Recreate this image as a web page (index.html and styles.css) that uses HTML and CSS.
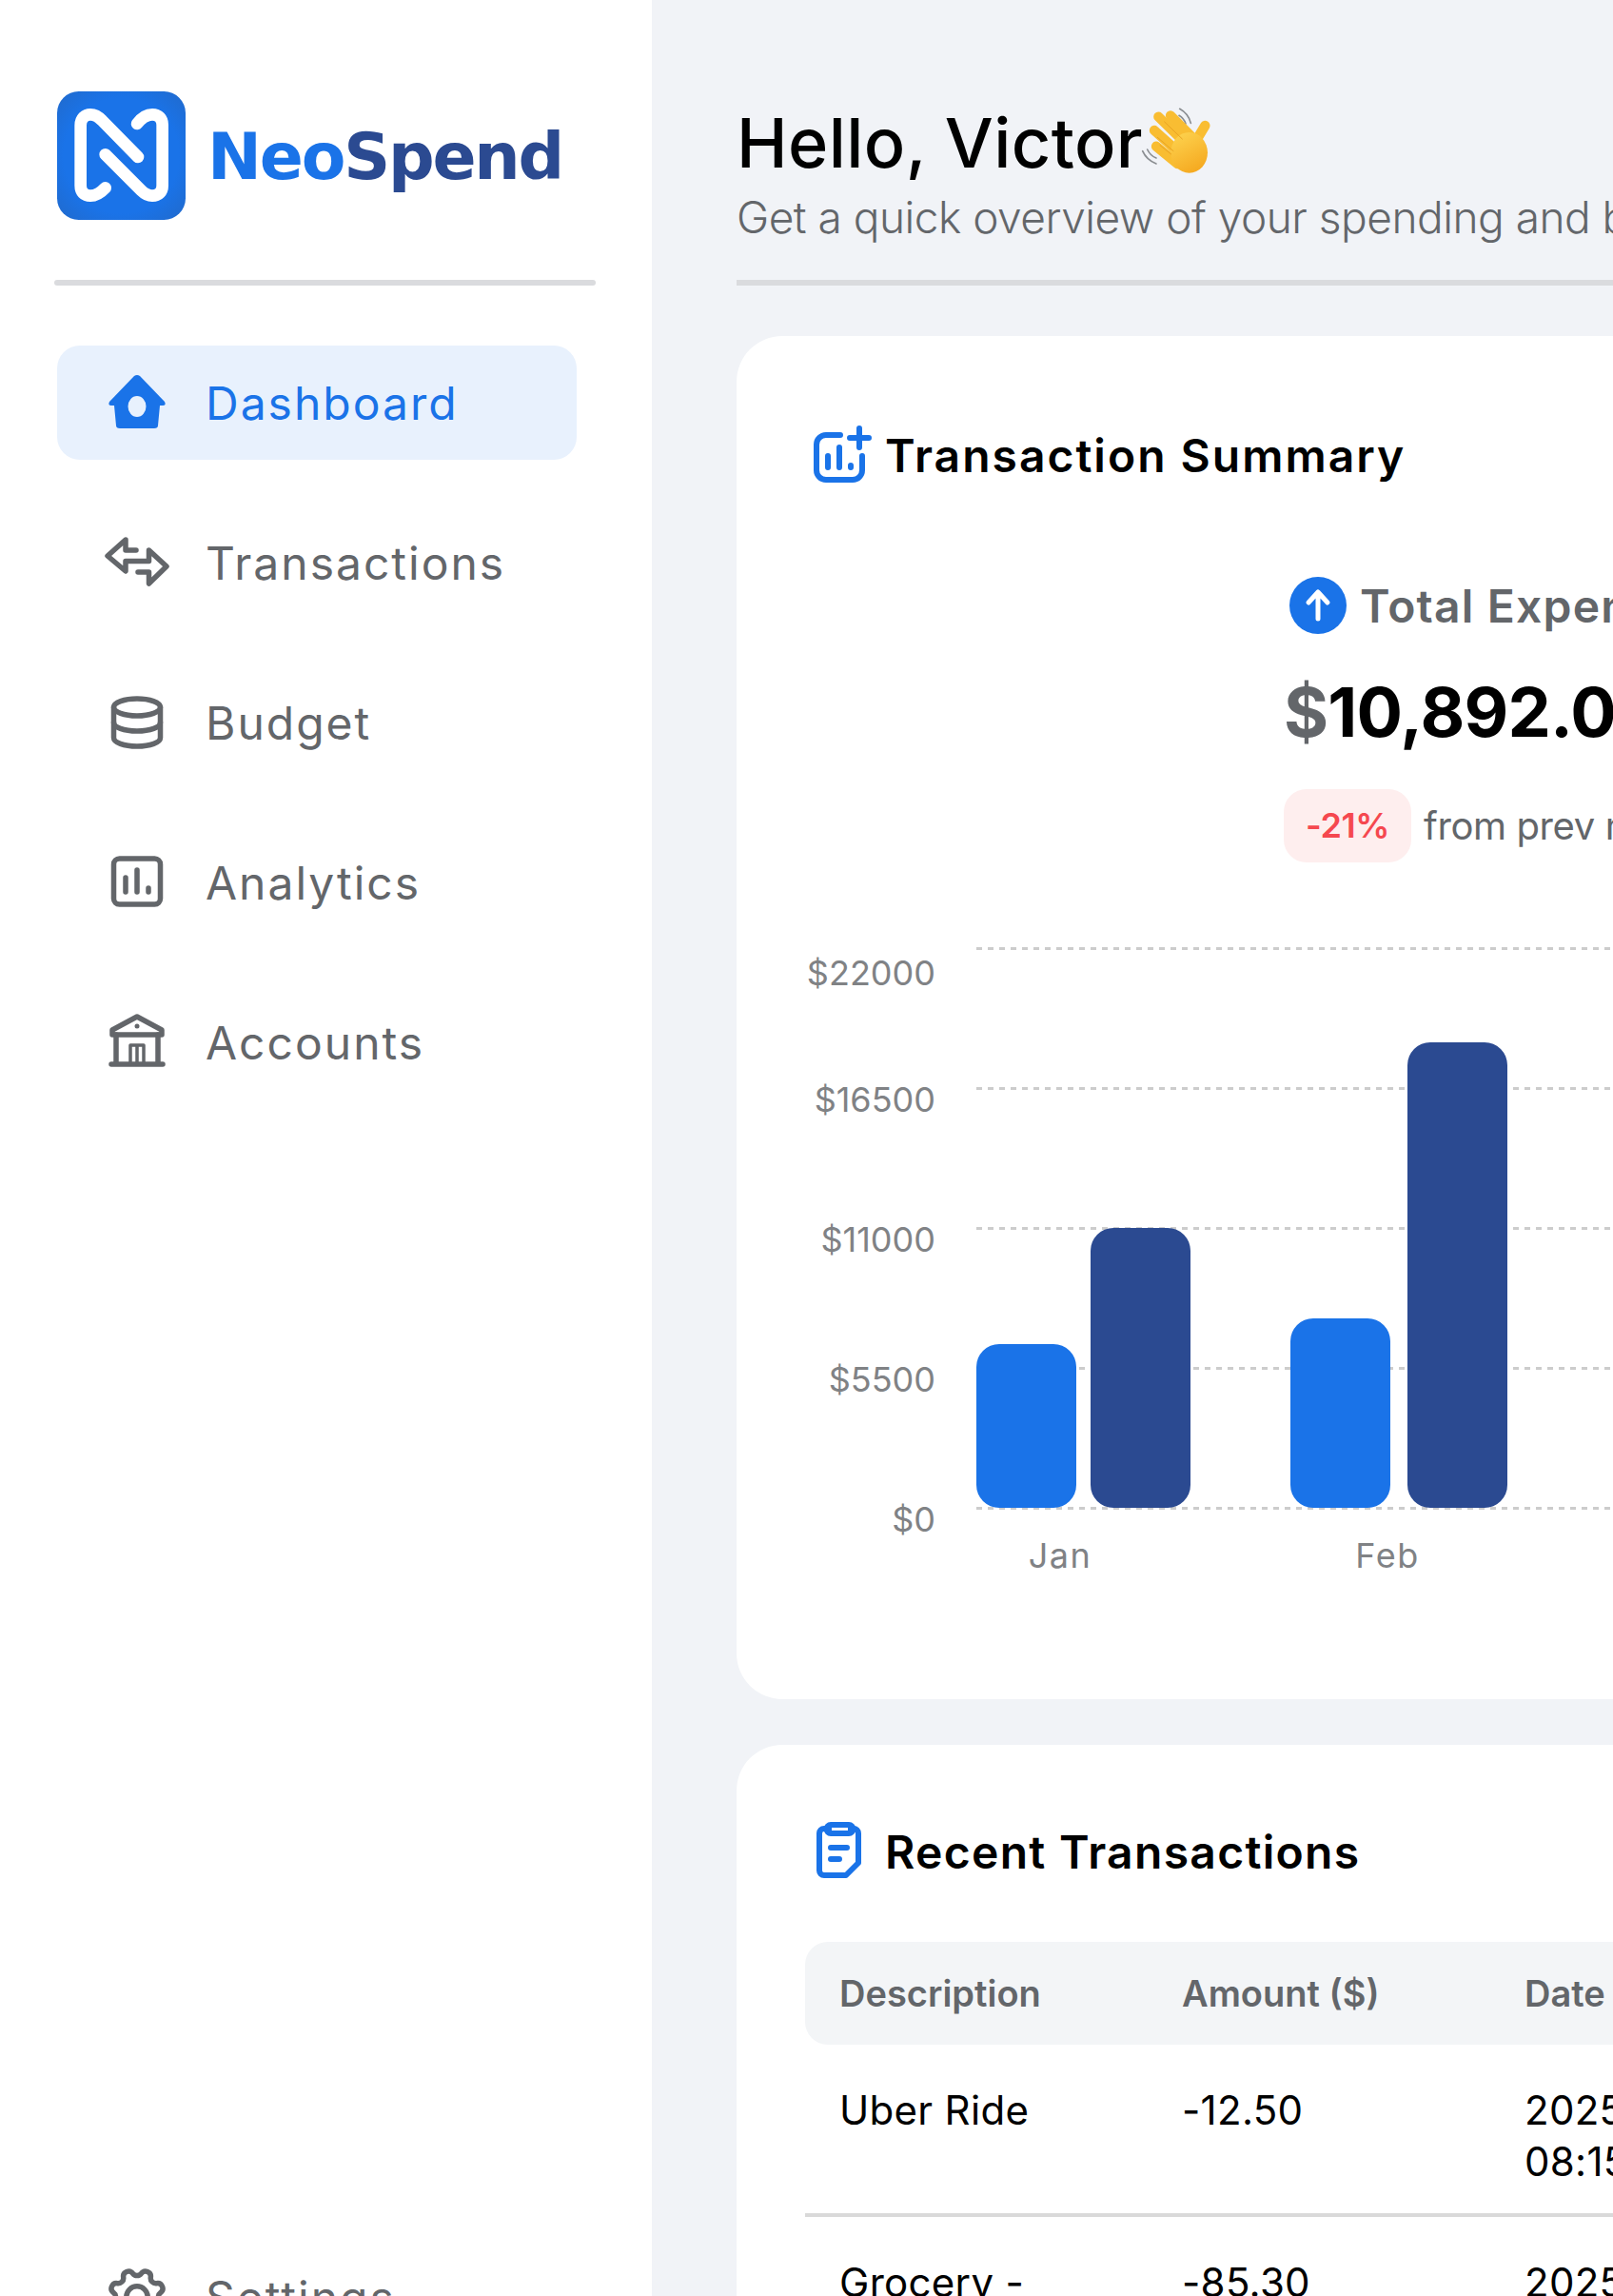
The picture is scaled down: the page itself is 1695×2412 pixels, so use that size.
FILE: index.html
```html
<!DOCTYPE html>
<html lang="en">

<head>
    <meta charset="UTF-8">
    <meta name="viewport" content="width=device-width, initial-scale=1.0">
    <title>NeoSpend</title>
    <link rel="stylesheet" href="styles.css">
</head>

<body>
    <div class="app">
        <aside class="sidebar">
            <div class="brand">
                <svg class="brand-mark" viewBox="30 33 405 405">
                    <defs>
                        <radialGradient id="markFill" r="0.75">
                            <stop offset="0.6" stop-color="#1a73e8" />
                            <stop offset="1" stop-color="#2268c6" />
                        </radialGradient>
                    </defs>
                    <rect x="30" y="33" width="405" height="405" rx="68" fill="url(#markFill)" />
                    <path d="M182 337C165 355 150 362 135 362C115 362 104 350 104 330V140C104 118 118 106 135 106C150 106 160 112 172 125L285 240" />
                    <path d="M182 232L295 345C307 357 318 362 330 362C350 362 362 350 362 330V138C362 118 350 106 330 106C312 106 295 118 282 135" />
                </svg>
                <span class="brand-name"><span class="brand-neo">Neo</span>Spend</span>
            </div>
            <div class="rule rule-side"></div>
            <nav class="nav">
                <a class="nav-item active" href="#">
                    <svg class="nav-icon" viewBox="0 0 60 60">
                        <path class="solid" fill-rule="evenodd" d="M27 2Q30 0 33 2L59 29Q61 33 57 33H54L52 54Q52 57 48 57H12Q8 57 8 54L6 33H3Q-1 33 1 29ZM30 23A9.5 11 0 1 0 30 45A9.5 11 0 1 0 30 23Z" />
                    </svg>
                    Dashboard
                </a>
                <a class="nav-item" href="#">
                    <svg class="nav-icon" viewBox="0 0 60 60">
                        <path d="M29 17H18V6L-1 23L18 39V28.5H42.5V17L61 34L42.5 52V40H31" />
                    </svg>
                    Transactions
                </a>
                <a class="nav-item" href="#">
                    <svg class="nav-icon" viewBox="0 0 60 60">
                        <ellipse cx="30" cy="14" rx="24.5" ry="9" />
                        <path d="M5.5 14V46C5.5 51 16 55 30 55S54.5 51 54.5 46V14" />
                        <path d="M5.5 30C5.5 35 16 39 30 39S54.5 35 54.5 30" />
                    </svg>
                    Budget
                </a>
                <a class="nav-item" href="#">
                    <svg class="nav-icon" viewBox="0 0 60 60">
                        <rect x="5.5" y="5" width="49" height="48" rx="6" />
                        <path d="M18 25V40M30 17V40M42 36V40" />
                    </svg>
                    Analytics
                </a>
                <a class="nav-item" href="#">
                    <svg class="nav-icon" viewBox="0 0 60 60">
                        <path d="M30 3L56 17V22H4V17Z" />
                        <path d="M8 22V53M52 22V53M3 53H57" />
                        <path class="bank-columns" d="M23 33H37M23 33V53M30 33V53M37 33V53" />
                        <circle class="solid" cx="30" cy="13" r="2.5" />
                    </svg>
                    Accounts
                </a>
                <a class="nav-item nav-bottom" href="#">
                    <svg class="nav-icon" viewBox="2.6 2.6 18.8 18.8">
                        <g transform="rotate(22.5 12 12)">
                            <path class="gear" d="M10.325 4.317c.426 -1.756 2.924 -1.756 3.35 0a1.724 1.724 0 0 0 2.573 1.066c1.543 -.94 3.31 .826 2.37 2.37a1.724 1.724 0 0 0 1.065 2.572c1.756 .426 1.756 2.924 0 3.35a1.724 1.724 0 0 0 -1.066 2.573c.94 1.543 -.826 3.31 -2.37 2.37a1.724 1.724 0 0 0 -2.572 1.065c-.426 1.756 -2.924 1.756 -3.35 0a1.724 1.724 0 0 0 -2.573 -1.066c-1.543 .94 -3.31 -.826 -2.37 -2.37a1.724 1.724 0 0 0 -1.065 -2.572c-1.756 -.426 -1.756 -2.924 0 -3.35a1.724 1.724 0 0 0 1.066 -2.573c-.94 -1.543 .826 -3.31 2.37 -2.37c1 .608 2.296 .07 2.572 -1.065z" />
                        </g>
                        <circle class="gear" cx="12" cy="12" r="3.5" />
                    </svg>
                    Settings
                </a>
            </nav>
        </aside>

        <main class="main">
            <div class="hello">
                <h1>Hello, Victor</h1>
                <svg class="wave" viewBox="0 0 300 270">
                    <defs>
                        <linearGradient id="waveFill" x1="0.2" y1="0" x2="0.7" y2="1">
                            <stop offset="0" stop-color="#fdd24e" />
                            <stop offset="1" stop-color="#f5a81f" />
                        </linearGradient>
                    </defs>
                    <g class="wave-lines">
                        <path d="M152 37C170 47 182 62 187 82" />
                        <path d="M150 58C160 64 167 72 171 84" />
                        <path d="M35 170C43 188 57 202 78 210" />
                        <path d="M50 165C56 178 65 187 78 192" />
                    </g>
                    <g class="fingers">
                        <path d="M85 62L170 145" />
                        <path d="M123 58L195 130" />
                        <path d="M72 105L150 175" />
                        <path d="M78 155L145 210" />
                        <path d="M232 90L205 135" />
                    </g>
                    <ellipse cx="182" cy="175" rx="58" ry="64" fill="url(#waveFill)" />
                    <g class="finger-gaps">
                        <path d="M104 78L160 132" />
                        <path d="M82 127L132 170" />
                        <path d="M90 152L125 180" />
                    </g>
                </svg>
            </div>
            <p class="subtitle">Get a quick overview of your spending and budget status this month.</p>
            <div class="rule rule-main"></div>

            <section class="card card-summary">
                <div class="card-title">
                    <svg class="title-icon" viewBox="0 0 72 72">
                        <path d="M60 37V52A10 10 0 0 1 50 62H22A10 10 0 0 1 12 52V25A10 10 0 0 1 22 15H37" />
                        <path d="M57 8V28M47 18H67" />
                        <path d="M24 37V49M36 28V49M48 47V49" />
                    </svg>
                    <h2>Transaction Summary</h2>
                </div>

                <div class="stat">
                    <div class="stat-label">
                        <svg class="stat-icon" viewBox="0 0 60 60">
                            <circle cx="30" cy="30" r="30" />
                            <path d="M30 44V17M20 27L30 16L40 27" />
                        </svg>
                        Total Expenses
                    </div>
                    <div class="stat-value"><span class="dollar">$</span>10,892.00</div>
                    <div class="stat-change">
                        <span class="badge">-21%</span>
                        from prev month
                    </div>
                </div>

                <div class="chart">
                    <div class="y-axis">
                        <span>$22000</span>
                        <span>$16500</span>
                        <span>$11000</span>
                        <span>$5500</span>
                        <span>$0</span>
                    </div>
                    <div class="plot-col">
                        <div class="plot">
                            <div class="grid-lines">
                                <i></i><i></i><i></i><i></i><i></i>
                            </div>
                            <div class="bars">
                                <div class="bar-group">
                                    <div class="bar bar-in" style="height:172px"></div>
                                    <div class="bar bar-out" style="height:294px"></div>
                                </div>
                                <div class="bar-group">
                                    <div class="bar bar-in" style="height:199px"></div>
                                    <div class="bar bar-out" style="height:489px"></div>
                                </div>
                            </div>
                        </div>
                        <div class="x-axis">
                            <span>Jan</span>
                            <span>Feb</span>
                        </div>
                    </div>
                </div>
            </section>

            <section class="card card-recent">
                <div class="card-title">
                    <svg class="title-icon" viewBox="0 0 72 72">
                        <path d="M21 12H20A5 5 0 0 0 15 17V56A5 5 0 0 0 20 61H43L56 48V17A5 5 0 0 0 51 12H50" />
                        <path class="clip" d="M27 5H46A7 7 0 0 1 46 20H27A7 7 0 0 1 27 5ZM28 11V14H45V11Z" />
                        <path d="M27 32H44M27 44H36" />
                    </svg>
                    <h2>Recent Transactions</h2>
                </div>

                <table class="tx-table">
                    <thead>
                        <tr>
                            <th>Description</th>
                            <th>Amount ($)</th>
                            <th>Date</th>
                        </tr>
                    </thead>
                    <tbody>
                        <tr>
                            <td>Uber Ride</td>
                            <td>-12.50</td>
                            <td>2025-05-01<br>08:15 AM</td>
                        </tr>
                        <tr>
                            <td>Grocery - Walmart</td>
                            <td>-85.30</td>
                            <td>2025-05-01<br>10:40 AM</td>
                        </tr>
                    </tbody>
                </table>
            </section>
        </main>
    </div>
</body>

</html>
```
FILE: styles.css
```css
* {
    box-sizing: border-box;
}

html,
body {
    margin: 0;
    height: 2412px;
    overflow: hidden;
}

body {
    font-family: Inter, "Noto Sans", sans-serif;
    background-color: #f1f3f7;
    color: #000;
}

.app {
    display: flex;
    width: 2400px;
}

/* sidebar */
.sidebar {
    flex: none;
    width: 685px;
    height: 2520px;
    padding: 96px 0 0 60px;
    background-color: #fff;
    display: flex;
    flex-direction: column;
}

.brand {
    display: flex;
    align-items: center;
    gap: 23px;
    height: 135px;
}

.brand-mark {
    width: 135px;
    height: 135px;
    flex: none;
}

.brand-mark path {
    fill: none;
    stroke: #fff;
    stroke-width: 38;
    stroke-linecap: round;
    stroke-linejoin: round;
}

.brand-name {
    margin-top: 2px;
    font-family: "DejaVu Sans", sans-serif;
    font-size: 68px;
    font-weight: 700;
    letter-spacing: -2.2px;
    color: #2b4a91;
}

.brand-neo {
    color: #1a73e8;
}

.rule {
    height: 6px;
    background-color: #dadbde;
}

.rule-side {
    width: 569px;
    margin: 63px 0 63px -3px;
    border-radius: 3px;
}

.nav {
    flex: 1;
    display: flex;
    flex-direction: column;
    gap: 48px;
}

.nav-item {
    display: flex;
    align-items: center;
    gap: 42px;
    flex: none;
    width: 546px;
    height: 120px;
    padding-left: 54px;
    border-radius: 24px;
    font-size: 48px;
    letter-spacing: 2px;
    color: #63666a;
    text-decoration: none;
}

.nav-item.active {
    background-color: #e8f1fd;
    color: #1a73e8;
}

.nav-bottom {
    margin-top: auto;
    margin-bottom: 47px;
}

.nav-icon {
    flex: none;
    width: 60px;
    height: 60px;
    overflow: visible;
    fill: none;
    stroke: currentColor;
    stroke-width: 5.5;
    stroke-linecap: round;
    stroke-linejoin: round;
}

.nav-icon .solid {
    fill: currentColor;
    stroke: none;
}

.nav-icon .bank-columns {
    stroke-width: 3.5;
}

.nav-icon .gear {
    stroke-width: 1.72;
}

/* main column */
.main {
    flex: none;
    width: 1500px;
    padding: 102px 0 0 89px;
}

.hello {
    display: flex;
    align-items: center;
    height: 96px;
}

h1 {
    margin: 0;
    font-size: 72px;
    font-weight: 500;
    line-height: 96px;
    letter-spacing: 0.4px;
}

.wave {
    flex: none;
    width: 100px;
    height: 90px;
    margin: 0 0 6px -12px;
}

.wave-lines path {
    fill: none;
    stroke: #8a8d91;
    stroke-width: 5;
    stroke-linecap: round;
}

.fingers path {
    fill: none;
    stroke: #f9bd32;
    stroke-width: 31;
    stroke-linecap: round;
}

.finger-gaps path {
    fill: none;
    stroke: #e8a323;
    stroke-width: 3;
    stroke-linecap: round;
}

.subtitle {
    margin: 0;
    font-size: 46px;
    line-height: 60px;
    font-weight: 300;
    letter-spacing: -0.5px;
    color: #63666a;
    white-space: nowrap;
}

.rule-main {
    margin: 36px 0 53px;
}

.card {
    background-color: #fff;
    border-radius: 48px;
    padding-left: 72px;
}

.card-summary {
    height: 1432px;
    padding-top: 90px;
}

.card-recent {
    margin-top: 48px;
    height: 800px;
    padding-top: 77px;
}

.card-title {
    display: flex;
    align-items: center;
    gap: 12px;
    height: 70px;
}

.title-icon {
    flex: none;
    width: 72px;
    height: 72px;
    fill: none;
    stroke: #1a73e8;
    stroke-width: 6;
    stroke-linecap: round;
    stroke-linejoin: round;
}

.title-icon .clip {
    fill: #1a73e8;
    fill-rule: evenodd;
    stroke: none;
}

h2 {
    margin: 0;
    font-size: 48px;
    font-weight: 600;
    letter-spacing: 2px;
}

.card-recent h2 {
    letter-spacing: 1.3px;
}

/* total expenses */
.stat {
    margin: 93px 0 0 503px;
}

.stat-label {
    display: flex;
    align-items: center;
    gap: 14px;
    height: 60px;
    padding-left: 6px;
    font-size: 48px;
    font-weight: 600;
    letter-spacing: 1.2px;
    color: #63666a;
    white-space: nowrap;
}

.stat-icon {
    flex: none;
    width: 60px;
    height: 60px;
}

.stat-icon circle {
    fill: #1a73e8;
}

.stat-icon path {
    fill: none;
    stroke: #fff;
    stroke-width: 5;
    stroke-linecap: round;
    stroke-linejoin: round;
}

.stat-value {
    margin-top: 32px;
    font-size: 72px;
    font-weight: 700;
    line-height: 100px;
    letter-spacing: -0.8px;
    white-space: nowrap;
}

.dollar {
    color: #63666a;
}

.stat-change {
    display: flex;
    align-items: center;
    gap: 13px;
    margin-top: 31px;
    font-size: 40px;
    letter-spacing: -0.4px;
    color: #63666a;
    white-space: nowrap;
}

.badge {
    display: block;
    width: 134px;
    height: 77px;
    border-radius: 24px;
    background-color: #feeeee;
    color: #f5484f;
    font-size: 36px;
    font-weight: 600;
    line-height: 77px;
    text-align: center;
}

/* chart */
.chart {
    display: flex;
    gap: 43px;
    margin-top: 89px;
    font-size: 36px;
    color: #808285;
}

.y-axis {
    flex: none;
    width: 137px;
    padding-top: 5px;
    display: flex;
    flex-direction: column;
    gap: 103px;
    align-items: flex-end;
}

.y-axis span {
    line-height: 44px;
}

.y-axis span:first-child {
    margin-bottom: -14px;
}

.plot-col {
    flex: 1;
}

.plot {
    position: relative;
    height: 591px;
}

.grid-lines {
    position: absolute;
    inset: 0;
    display: flex;
    flex-direction: column;
    justify-content: space-between;
}

.grid-lines i {
    display: block;
    height: 3px;
    background-image: repeating-linear-gradient(to right, #ccc 0 6px, transparent 6px 12px);
}

.bars {
    position: relative;
    display: flex;
    align-items: flex-end;
    gap: 105px;
    height: 589px;
}

.bar-group {
    display: flex;
    align-items: flex-end;
    gap: 15px;
}

.bar-group + .bar-group {
    gap: 18px;
}

.bar {
    width: 105px;
    border-radius: 24px;
}

.bar-in {
    background-color: #1a73e8;
}

.bar-out {
    background-color: #2b4a91;
}

.x-axis {
    display: grid;
    grid-template-columns: 176px 512px;
    justify-items: center;
    margin-top: 26px;
    line-height: 44px;
    letter-spacing: 1.5px;
}

/* recent transactions */
.tx-table {
    margin: 60px 0 0 0;
    border-collapse: collapse;
    table-layout: fixed;
    width: 1080px;
    font-size: 42px;
    line-height: 54px;
    letter-spacing: 0.3px;
}

.tx-table th {
    width: 360px;
    height: 108px;
    padding: 0 36px;
    background-color: #f3f5f7;
    color: #63666a;
    font-size: 38px;
    font-weight: 600;
    letter-spacing: 0;
    text-align: left;
}

.tx-table th:first-child {
    border-radius: 24px 0 0 24px;
}

.tx-table td {
    padding: 42px 36px 27px;
    vertical-align: top;
    border-bottom: 4px solid #d9d9d9;
}
```
